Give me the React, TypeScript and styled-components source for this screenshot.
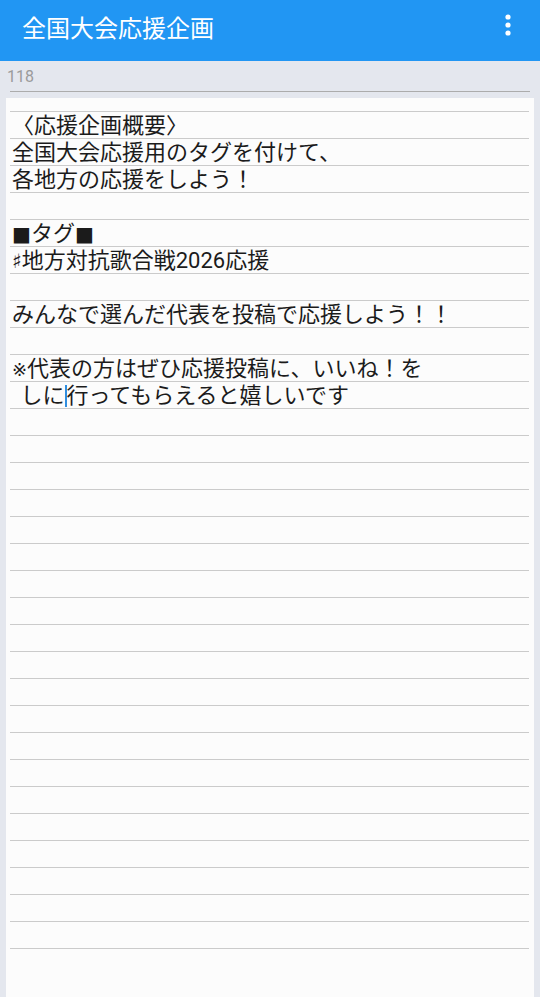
import React from "react";
import styled, { createGlobalStyle } from "styled-components";

const GlobalStyle = createGlobalStyle`
  html, body {
    margin: 0;
    padding: 0;
    background: #e4e7ee;
  }
  body {
    font-family: "Noto Sans CJK JP", "Noto Sans", sans-serif;
  }
`;

const Page = styled.div`
  display: flex;
  flex-direction: column;
  min-height: 100vh;
  background: #e4e7ee;
`;

const AppBar = styled.header`
  height: 61px;
  box-sizing: border-box;
  background: #2196f3;
  display: flex;
  align-items: center;
  justify-content: space-between;
  padding: 0 20px 7px 22px;
`;

const Title = styled.h1`
  margin: 0;
  font-family: "Noto Sans CJK JP", sans-serif;
  font-size: 24px;
  font-weight: 400;
  color: #ffffff;
  line-height: 30px;
`;

const MenuButton = styled.button`
  border: 0;
  background: transparent;
  padding: 0;
  margin-top: -4px;
  width: 24px;
  height: 24px;
  display: flex;
  align-items: center;
  justify-content: center;
`;

const CounterArea = styled.div`
  display: flex;
  flex-direction: column;
  padding: 6px 10px 0 10px;
`;

const CountText = styled.span`
  font-family: Roboto, "Noto Sans", sans-serif;
  font-size: 16px;
  line-height: 20px;
  color: #9b9b9b;
  margin-left: -3px;
`;

const CountRule = styled.div`
  height: 1px;
  background: #acacac;
  margin-top: 4px;
`;

const Sheet = styled.main`
  flex: 1;
  margin: 6px 6px 0 6px;
  background: #fcfcfc;
  padding: 13px 5px 80px 4px;
`;

const Lines = styled.div`
  display: flex;
  flex-direction: column;
  border-top: 1px solid #cbcbcb;
`;

const Row = styled.div<{ $indent?: number }>`
  height: 27px;
  box-sizing: border-box;
  border-bottom: 1px solid #cbcbcb;
  padding-left: ${(p) => 2 + (p.$indent ?? 0)}px;
  font-family: Roboto, "Noto Sans CJK JP", sans-serif;
  font-size: 22px;
  line-height: 27px;
  color: #1b1b1b;
  white-space: pre;
  overflow: hidden;
`;

const Sym = styled.span<{ $size?: number }>`
  font-family: "DejaVu Sans", sans-serif;
  font-size: ${(p) => p.$size ?? 22}px;
`;

const Caret = styled.span`
  display: inline-block;
  width: 2px;
  height: 22px;
  background: #2f8ee0;
  vertical-align: -4px;
  margin: 0 -1px 0 1px;
`;

export default function App() {
  const rows: React.ReactNode[] = [
    <Row key="r1">〈応援企画概要〉</Row>,
    <Row key="r2">全国大会応援用のタグを付けて、</Row>,
    <Row key="r3">各地方の応援をしよう！</Row>,
    <Row key="r4" />,
    <Row key="r5">
      <Sym $size={20}>■</Sym>タグ<Sym $size={20}>■</Sym>
    </Row>,
    <Row key="r6">
      <Sym $size={20}>♯</Sym>地方対抗歌合戦2026応援
    </Row>,
    <Row key="r7" />,
    <Row key="r8">みんなで選んだ代表を投稿で応援しよう！！</Row>,
    <Row key="r9" />,
    <Row key="r10">
      <Sym $size={18}>※</Sym>代表の方はぜひ応援投稿に、いいね！を
    </Row>,
    <Row key="r11" $indent={3}>
      {" しに"}
      <Caret />
      {"行ってもらえると嬉しいです"}
    </Row>,
  ];
  const TOTAL_ROWS = 31;
  while (rows.length < TOTAL_ROWS) {
    rows.push(<Row key={`e${rows.length}`} />);
  }

  return (
    <>
      <GlobalStyle />
      <Page>
        <AppBar>
          <Title>全国大会応援企画</Title>
          <MenuButton aria-label="menu">
            <svg width="24" height="24" viewBox="0 0 24 24">
              <circle cx="12" cy="4" r="2.6" fill="#fff" />
              <circle cx="12" cy="12" r="2.6" fill="#fff" />
              <circle cx="12" cy="20" r="2.6" fill="#fff" />
            </svg>
          </MenuButton>
        </AppBar>
        <CounterArea>
          <CountText>118</CountText>
          <CountRule />
        </CounterArea>
        <Sheet>
          <Lines>{rows}</Lines>
        </Sheet>
      </Page>
    </>
  );
}
